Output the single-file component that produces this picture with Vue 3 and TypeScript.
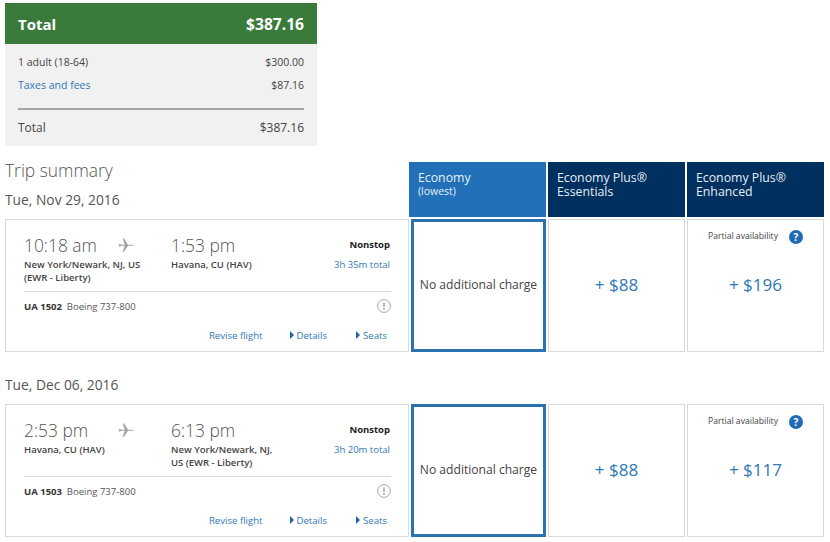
<template>
  <div class="page">
    <section class="total-box">
      <div class="total-head">
        <span class="head-label">Total</span>
        <span>$387.16</span>
      </div>
      <div class="total-body">
        <div class="line"><span>1 adult (18-64)</span><span>$300.00</span></div>
        <div class="line second"><a class="link">Taxes and fees</a><span>$87.16</span></div>
        <div class="line grand"><span>Total</span><span>$387.16</span></div>
      </div>
    </section>

    <div class="fare-head">
      <div class="heading">
        <h2>Trip summary</h2>
        <div class="date first-date">{{ flights[0].date }}</div>
      </div>
      <div class="fare-col lowest">Economy <span class="sub">(lowest)</span></div>
      <div class="fare-col">Economy Plus® Essentials</div>
      <div class="fare-col">Economy Plus® Enhanced</div>
    </div>

    <template v-for="(f, i) in flights" :key="f.number">
      <div v-if="i > 0" class="date later-date">{{ f.date }}</div>
      <div class="flight-row">
        <div class="card">
          <div class="route">
            <div class="stop from">
              <div class="time">{{ f.depart }}</div>
              <div class="place">{{ f.from }}</div>
            </div>
            <svg class="plane" viewBox="0 0 16 14" width="16" height="14">
              <path d="M0.4 5.9 L2 5.9 L3.4 6.7 L6.8 6.7 L4.6 0.6 L6 0.6 L10 6.7 L14 6.7 C15 6.7 15.7 6.9 15.7 7.2 C15.7 7.5 15 7.7 14 7.7 L10 7.7 L6 13.8 L4.6 13.8 L6.8 7.7 L3.4 7.7 L2 8.5 L0.4 8.5 L1.4 7.2 Z" fill="#a3a3a3" />
            </svg>
            <div class="stop to">
              <div class="time">{{ f.arrive }}</div>
              <div class="place">{{ f.to }}</div>
            </div>
            <div class="meta">
              <div class="nonstop">Nonstop</div>
              <div class="duration">{{ f.duration }}</div>
            </div>
          </div>
          <div class="equipment">
            <span><b>{{ f.number }}</b>&nbsp;&nbsp;Boeing 737-800</span>
            <svg class="warn" viewBox="0 0 14 14" width="14" height="14">
              <circle cx="7" cy="7" r="6.4" fill="none" stroke="#a8a8a8" stroke-width="1" />
              <path d="M7 3.4 V8" stroke="#a0a0a0" stroke-width="1.4" />
              <circle cx="7" cy="10" r="0.9" fill="#a0a0a0" />
            </svg>
          </div>
          <div class="actions">
            <a class="link revise">Revise flight</a>
            <a class="link details"><i class="caret"></i>Details</a>
            <a class="link seats"><i class="caret"></i>Seats</a>
          </div>
        </div>
        <div class="cell chosen">No additional charge</div>
        <div class="cell"><span class="price">+ $88</span></div>
        <div class="cell">
          <div class="partial">
            <span>Partial availability</span>
            <span class="help">?</span>
          </div>
          <span class="price">{{ f.enhanced }}</span>
        </div>
      </div>
    </template>
  </div>
</template>

<script setup lang="ts">
interface Flight {
  date: string;
  depart: string;
  arrive: string;
  from: string;
  to: string;
  duration: string;
  number: string;
  enhanced: string;
}

const flights: Flight[] = [
  {
    date: 'Tue, Nov 29, 2016',
    depart: '10:18 am',
    arrive: '1:53 pm',
    from: 'New York/Newark, NJ, US (EWR - Liberty)',
    to: 'Havana, CU (HAV)',
    duration: '3h 35m total',
    number: 'UA 1502',
    enhanced: '+ $196',
  },
  {
    date: 'Tue, Dec 06, 2016',
    depart: '2:53 pm',
    arrive: '6:13 pm',
    from: 'Havana, CU (HAV)',
    to: 'New York/Newark, NJ, US (EWR - Liberty)',
    duration: '3h 20m total',
    number: 'UA 1503',
    enhanced: '+ $117',
  },
];
</script>

<style scoped>
.page {
  width: 830px;
  height: 542px;
  overflow: hidden;
  box-sizing: border-box;
  padding: 3px 6px 0 5px;
  font-family: "Open Sans", "Liberation Sans", sans-serif;
  color: #444;
  background: #fff;
}

.total-box {
  width: 312px;
}

.total-head {
  height: 41px;
  padding: 0 13px;
  display: flex;
  align-items: center;
  justify-content: space-between;
  background: #3a7b3c;
  color: #fff;
  font-size: 15.6px;
  font-weight: 700;
}

.head-label {
  font-size: 15px;
}

.total-body {
  height: 102px;
  box-sizing: border-box;
  padding: 9px 13px 0;
  background: #f1f1f1;
  font-size: 10.5px;
  color: #444;
}

.line {
  display: flex;
  justify-content: space-between;
  align-items: center;
  height: 18px;
}

.second {
  margin-top: 5px;
}

.grand {
  margin-top: 14px;
  padding-top: 7px;
  height: 20px;
  border-top: 2px solid #a6a6a6;
  font-size: 12px;
}

.link {
  color: #2f77b5;
}

.fare-head {
  display: grid;
  grid-template-columns: 402px 137px 137px 137px;
  column-gap: 2px;
  margin-top: 16px;
  height: 55px;
}

.heading h2 {
  margin: -2px 0 0;
  font-size: 17.4px;
  font-weight: 300;
  line-height: 20px;
  color: #555;
}

.date {
  font-size: 13.8px;
  color: #555;
  line-height: 18px;
}

.first-date {
  margin-top: 11px;
}

.later-date {
  margin-top: 24px;
  margin-bottom: 10px;
}

.fare-col {
  box-sizing: border-box;
  padding: 9px 9px 0;
  background: #00305f;
  color: #e8eef5;
  font-size: 12.3px;
  line-height: 14px;
}

.lowest {
  background: #2170b8;
}

.sub {
  display: block;
  font-size: 10.5px;
  line-height: 13px;
}

.flight-row {
  display: grid;
  grid-template-columns: 404px 135px 137px 137px;
  column-gap: 2px;
  margin-top: 2px;
  height: 133px;
}

.later-date + .flight-row {
  margin-top: 0;
}

.card {
  box-sizing: border-box;
  border: 1px solid #d9d9d9;
  padding: 0 17px 0 18px;
  display: flex;
  flex-direction: column;
}

.route {
  display: flex;
  height: 72px;
  padding-top: 15px;
  box-sizing: border-box;
  border-bottom: 1px solid #d9d9d9;
  position: relative;
}

.stop.from {
  width: 147px;
}

.stop.to {
  width: 110px;
}

.time {
  font-size: 17.4px;
  font-weight: 300;
  line-height: 20px;
  color: #555;
}

.place {
  margin-top: 3px;
  font-size: 9.5px;
  font-weight: 600;
  line-height: 13px;
  color: #444;
  width: 120px;
}

.to .place {
  width: 104px;
}

.plane {
  position: absolute;
  left: 94px;
  top: 18px;
}

.meta {
  margin-left: auto;
  margin-right: 1px;
  text-align: right;
  font-size: 9.5px;
}

.nonstop {
  font-weight: 700;
  color: #222;
  line-height: 20px;
}

.duration {
  color: #2f77b5;
  line-height: 20px;
}

.equipment {
  display: flex;
  justify-content: space-between;
  align-items: center;
  height: 28px;
  font-size: 9.5px;
  color: #555;
}

.equipment b {
  font-weight: 700;
  color: #333;
}

.warn {
  display: block;
}

.actions {
  display: flex;
  justify-content: flex-end;
  align-items: center;
  height: 30px;
  font-size: 9.6px;
  box-sizing: border-box;
}

.revise {
  margin-right: 27px;
}

.details {
  margin-right: 29px;
}

.seats {
  margin-right: 4px;
}

.caret {
  display: inline-block;
  width: 0;
  height: 0;
  margin-right: 3px;
  border-top: 4px solid transparent;
  border-bottom: 4px solid transparent;
  border-left: 4px solid #1f66a5;
}

.cell {
  position: relative;
  box-sizing: border-box;
  border: 1px solid #d9d9d9;
  padding-bottom: 2px;
  display: flex;
  align-items: center;
  justify-content: center;
}

.chosen {
  border: 3px solid #2a72b0;
  font-size: 12.1px;
  color: #444;
  white-space: nowrap;
}

.price {
  font-size: 17px;
  color: #2f77b5;
}

.partial {
  position: absolute;
  top: 10px;
  left: 20px;
  display: flex;
  align-items: center;
  gap: 11px;
  font-size: 8.6px;
  color: #444;
  white-space: nowrap;
}

.partial > span:first-child {
  margin-top: -2px;
}

.help {
  width: 14px;
  height: 14px;
  border-radius: 50%;
  background: #1f6cb5;
  color: #fff;
  font-size: 10px;
  font-weight: 700;
  line-height: 14px;
  text-align: center;
}
</style>
